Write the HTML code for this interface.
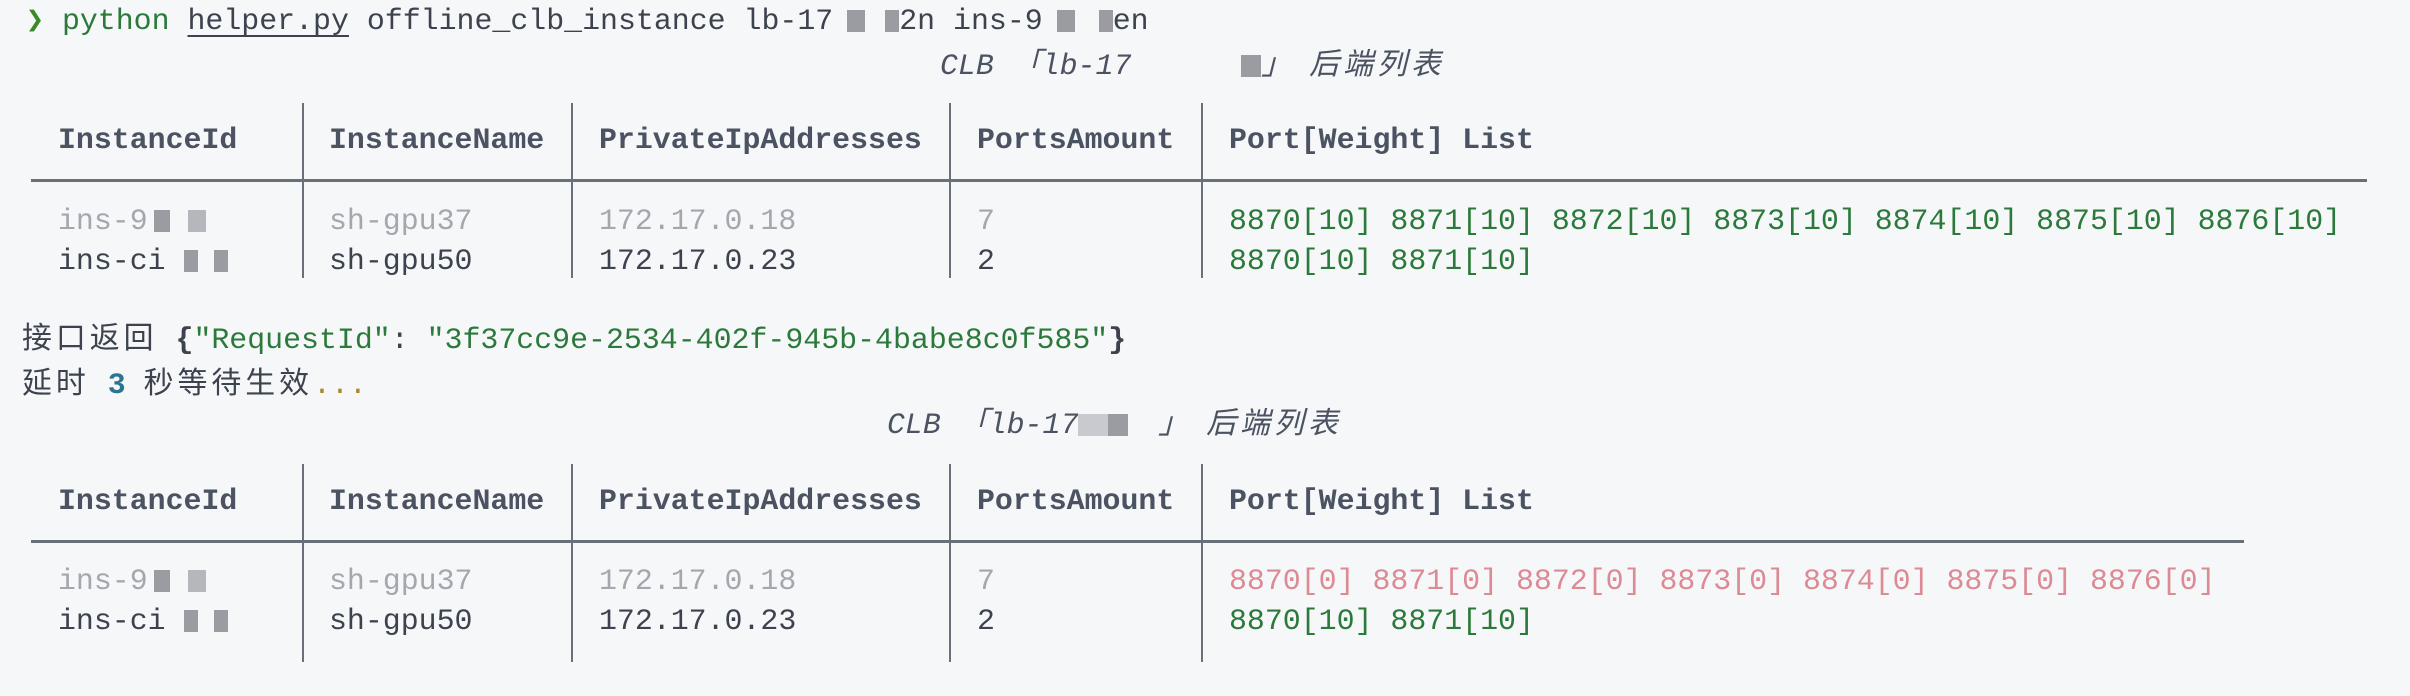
<!DOCTYPE html>
<html><head><meta charset="utf-8"><style>
html,body{margin:0;padding:0;width:2410px;height:696px;overflow:hidden;background:#f6f7f9;}
body{position:relative;font-family:"Liberation Mono","Noto Sans CJK SC",monospace;font-size:29.9px;color:#3d434e;}
.t{position:absolute;white-space:pre;line-height:40px;height:40px;}
.b{font-weight:bold;color:#4b5261;}
.dim{color:#a3a7ae;}
.g{color:#2b7a3b;}
.r{color:#dc8a93;}
.v{position:absolute;width:2px;background:#6a707a;}
.h{position:absolute;height:3px;background:#6a707a;}
.red{display:inline-block;vertical-align:middle;background:#9a9ca2;}
.cjk{font-family:"Noto Sans CJK SC","Liberation Sans",sans-serif;letter-spacing:4px;}
.it{font-style:italic;color:#4b5261;}
</style></head><body>

<div class="t" style="left:26px;top:1px;"><span style="color:#3a8a2a;font-weight:bold">❯</span> <span class="g">python</span> <span style="text-decoration:underline;text-underline-offset:6px;">helper.py</span> offline_clb_instance lb-17<span class="red" style="width:18px;height:22px;margin-left:14px;"></span><span class="red" style="width:14px;height:22px;margin-left:20px;"></span>2n ins-9<span class="red" style="width:18px;height:22px;margin-left:14px;"></span><span class="red" style="width:14px;height:22px;margin-left:24px;"></span>en</div>

<div class="t it" style="left:940px;top:41px;">CLB 「lb-17<span style="display:inline-block;width:110px"></span><span class="red" style="width:20px;height:22px;"></span>」 <span class="cjk">后端列表</span></div>

<div class="v" style="left:302px;top:103px;height:175px"></div>
<div class="v" style="left:571px;top:103px;height:175px"></div>
<div class="v" style="left:949px;top:103px;height:175px"></div>
<div class="v" style="left:1201px;top:103px;height:175px"></div>
<div class="h" style="left:31px;top:179px;width:2336px"></div>
<div class="t b" style="left:58px;top:120px">InstanceId</div>
<div class="t b" style="left:329px;top:120px">InstanceName</div>
<div class="t b" style="left:599px;top:120px">PrivateIpAddresses</div>
<div class="t b" style="left:977px;top:120px">PortsAmount</div>
<div class="t b" style="left:1229px;top:120px">Port[Weight] List</div>

<div class="t dim" style="left:58px;top:201px">ins-9<span class="red" style="width:16px;height:22px;margin-left:6px;"></span><span class="red" style="width:18px;height:22px;margin-left:18px;background:#b5b7bc"></span></div>
<div class="t dim" style="left:329px;top:201px">sh-gpu37</div>
<div class="t dim" style="left:599px;top:201px">172.17.0.18</div>
<div class="t dim" style="left:977px;top:201px">7</div>
<div class="t g" style="left:1229px;top:201px">8870[10] 8871[10] 8872[10] 8873[10] 8874[10] 8875[10] 8876[10]</div>

<div class="t" style="left:58px;top:241px">ins-ci<span class="red" style="width:14px;height:22px;margin-left:18px;"></span><span class="red" style="width:14px;height:22px;margin-left:16px;"></span></div>
<div class="t" style="left:329px;top:241px">sh-gpu50</div>
<div class="t" style="left:599px;top:241px">172.17.0.23</div>
<div class="t" style="left:977px;top:241px">2</div>
<div class="t g" style="left:1229px;top:241px">8870[10] 8871[10]</div>

<div class="t" style="left:22px;top:315px"><span class="cjk">接口返回</span> <b>{</b><span class="g">"RequestId"</span>: <span class="g">"3f37cc9e-2534-402f-945b-4babe8c0f585"</span><b>}</b></div>
<div class="t" style="left:22px;top:360px"><span class="cjk">延时</span> <b style="color:#2b7590">3</b> <span class="cjk">秒等待生效</span><span style="color:#a88a2c">...</span></div>

<div class="t it" style="left:887px;top:400px;">CLB 「lb-17<span class="red" style="width:30px;height:22px;background:#c8cacf"></span><span class="red" style="width:20px;height:22px;"></span><span style="display:inline-block;width:30px"></span>」 <span class="cjk">后端列表</span></div>

<div class="v" style="left:302px;top:464px;height:198px"></div>
<div class="v" style="left:571px;top:464px;height:198px"></div>
<div class="v" style="left:949px;top:464px;height:198px"></div>
<div class="v" style="left:1201px;top:464px;height:198px"></div>
<div class="h" style="left:31px;top:540px;width:2213px"></div>
<div class="t b" style="left:58px;top:481px">InstanceId</div>
<div class="t b" style="left:329px;top:481px">InstanceName</div>
<div class="t b" style="left:599px;top:481px">PrivateIpAddresses</div>
<div class="t b" style="left:977px;top:481px">PortsAmount</div>
<div class="t b" style="left:1229px;top:481px">Port[Weight] List</div>

<div class="t dim" style="left:58px;top:561px">ins-9<span class="red" style="width:16px;height:22px;margin-left:6px;"></span><span class="red" style="width:18px;height:22px;margin-left:18px;background:#b5b7bc"></span></div>
<div class="t dim" style="left:329px;top:561px">sh-gpu37</div>
<div class="t dim" style="left:599px;top:561px">172.17.0.18</div>
<div class="t dim" style="left:977px;top:561px">7</div>
<div class="t r" style="left:1229px;top:561px">8870[0] 8871[0] 8872[0] 8873[0] 8874[0] 8875[0] 8876[0]</div>

<div class="t" style="left:58px;top:601px">ins-ci<span class="red" style="width:14px;height:22px;margin-left:18px;"></span><span class="red" style="width:14px;height:22px;margin-left:16px;"></span></div>
<div class="t" style="left:329px;top:601px">sh-gpu50</div>
<div class="t" style="left:599px;top:601px">172.17.0.23</div>
<div class="t" style="left:977px;top:601px">2</div>
<div class="t g" style="left:1229px;top:601px">8870[10] 8871[10]</div>

</body></html>
